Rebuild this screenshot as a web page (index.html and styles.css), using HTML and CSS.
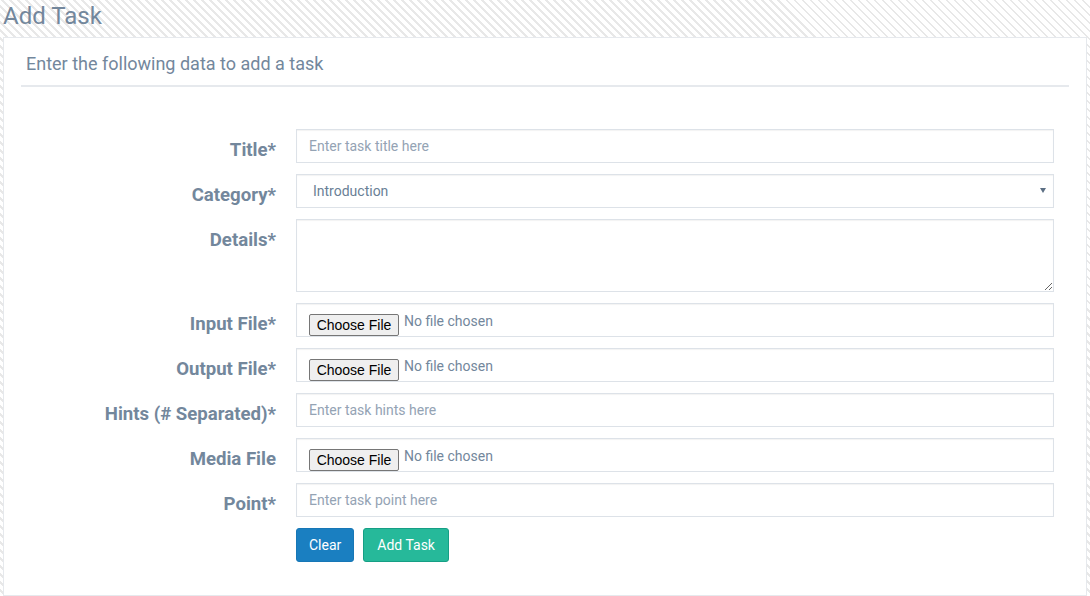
FILE: index.html
```html
<!DOCTYPE html>
<html lang="en">
<head>
<meta charset="utf-8">
<title>Add Task</title>
<link rel="stylesheet" href="styles.css">
</head>
<body>
<div class="page">
  <h3 class="page-title">Add Task</h3>
  <div class="panel">
    <div class="panel-title">
      <h2>Enter the following data to add a task</h2>
    </div>
    <form class="task-form">
      <label class="form-label" for="title">Title*</label>
      <div class="field"><input id="title" class="form-control" type="text" placeholder="Enter task title here"></div>

      <label class="form-label" for="category">Category*</label>
      <div class="field select-wrap">
        <select id="category" class="form-control select-control">
          <option>Introduction</option>
        </select>
      </div>

      <label class="form-label" for="details">Details*</label>
      <div class="field"><textarea id="details" class="form-control textarea-control"></textarea></div>

      <label class="form-label">Input File*</label>
      <div class="field"><div class="form-control file-control"><span class="file-btn">Choose File</span><span class="file-name">No file chosen</span></div></div>

      <label class="form-label">Output File*</label>
      <div class="field"><div class="form-control file-control"><span class="file-btn">Choose File</span><span class="file-name">No file chosen</span></div></div>

      <label class="form-label" for="hints">Hints (# Separated)*</label>
      <div class="field"><input id="hints" class="form-control" type="text" placeholder="Enter task hints here"></div>

      <label class="form-label">Media File</label>
      <div class="field"><div class="form-control file-control"><span class="file-btn">Choose File</span><span class="file-name">No file chosen</span></div></div>

      <label class="form-label" for="point">Point*</label>
      <div class="field"><input id="point" class="form-control" type="text" placeholder="Enter task point here"></div>

      <div class="form-label empty"></div>
      <div class="field actions">
        <button type="reset" class="btn btn-primary">Clear</button>
        <button type="button" class="btn btn-success">Add Task</button>
      </div>
    </form>
  </div>
</div>
</body>
</html>
```

FILE: styles.css
```css
* { box-sizing: border-box; }

html, body {
  margin: 0;
  padding: 0;
  height: 100%;
}

body {
  font-family: Roboto, "Liberation Sans", Arial, sans-serif;
  color: #73879C;
  background-color: #ffffff;
  background-image: repeating-linear-gradient(45deg, #ffffff 0 3px, #e8e8e8 3px 5px, #ffffff 5px 5.66px);
  overflow: hidden;
}

.page {
  padding: 0 3px;
}

.page-title {
  margin: 0;
  padding-top: 2px;
  height: 37px;
  font-size: 24px;
  line-height: 28px;
  font-weight: 400;
  color: #73879C;
}

.panel {
  background: #fff;
  border: 1px solid #E6E9ED;
  padding: 10px 17px 10px;
  height: 559px;
}

.panel-title {
  padding: 5px 5px 10px;
  border-bottom: 2px solid #E6E9ED;
}

.panel-title h2 {
  margin: 0;
  font-size: 18px;
  line-height: 22px;
  font-weight: 400;
  color: #73879C;
}

.task-form {
  display: grid;
  grid-template-columns: 255px 1fr;
  column-gap: 20px;
  row-gap: 11px;
  padding: 42px 15px 0 0;
}

.form-label {
  text-align: right;
  font-size: 18.6px;
  line-height: 20px;
  font-weight: 700;
  padding-top: 11px;
  color: #73879C;
}

.field {
  min-width: 0;
}

.form-control {
  display: block;
  width: 100%;
  height: 34px;
  padding: 6px 12px;
  font-family: Roboto, "Liberation Sans", Arial, sans-serif;
  font-size: 14px;
  line-height: 20px;
  color: #6a7f96;
  background: #fff;
  border: 1px solid #DDE2E8;
  border-radius: 0;
  box-shadow: inset 0 1px 1px rgba(0, 0, 0, 0.05);
  outline: none;
}

.form-control::placeholder {
  color: #94a3b4;
  opacity: 1;
}

.select-wrap {
  position: relative;
}

.select-control {
  appearance: none;
  -webkit-appearance: none;
  padding-left: 16px;
}

.select-wrap::after {
  content: "";
  position: absolute;
  right: 8px;
  top: 14px;
  width: 0;
  height: 0;
  border-left: 3px solid transparent;
  border-right: 3px solid transparent;
  border-top: 5px solid #5c6f84;
}

.textarea-control {
  height: 73px;
  resize: vertical;
}

.file-control {
  display: flex;
  align-items: flex-start;
  padding: 0 12px;
}

.file-btn {
  display: block;
  width: 90px;
  height: 22px;
  margin-top: 10px;
  border: 1px solid #767676;
  border-radius: 2px;
  background: #efefef;
  font-family: "Liberation Sans", Arial, sans-serif;
  font-size: 14px;
  line-height: 20px;
  color: #000;
  text-align: center;
}

.file-name {
  display: block;
  margin-top: 7px;
  margin-left: 5px;
  font-size: 14px;
  line-height: 20px;
  color: #73879C;
}

.actions {
  display: flex;
  gap: 9px;
}

.btn {
  height: 34px;
  padding: 6px 12px;
  font-family: Roboto, "Liberation Sans", Arial, sans-serif;
  font-size: 14px;
  line-height: 20px;
  color: #fff;
  border-radius: 3px;
  cursor: pointer;
}

.btn-primary {
  background: #1a7fc1;
  border: 1px solid #1777b6;
}

.btn-success {
  background: #26B99A;
  border: 1px solid #169F85;
  padding: 6px 13px;
}
```
